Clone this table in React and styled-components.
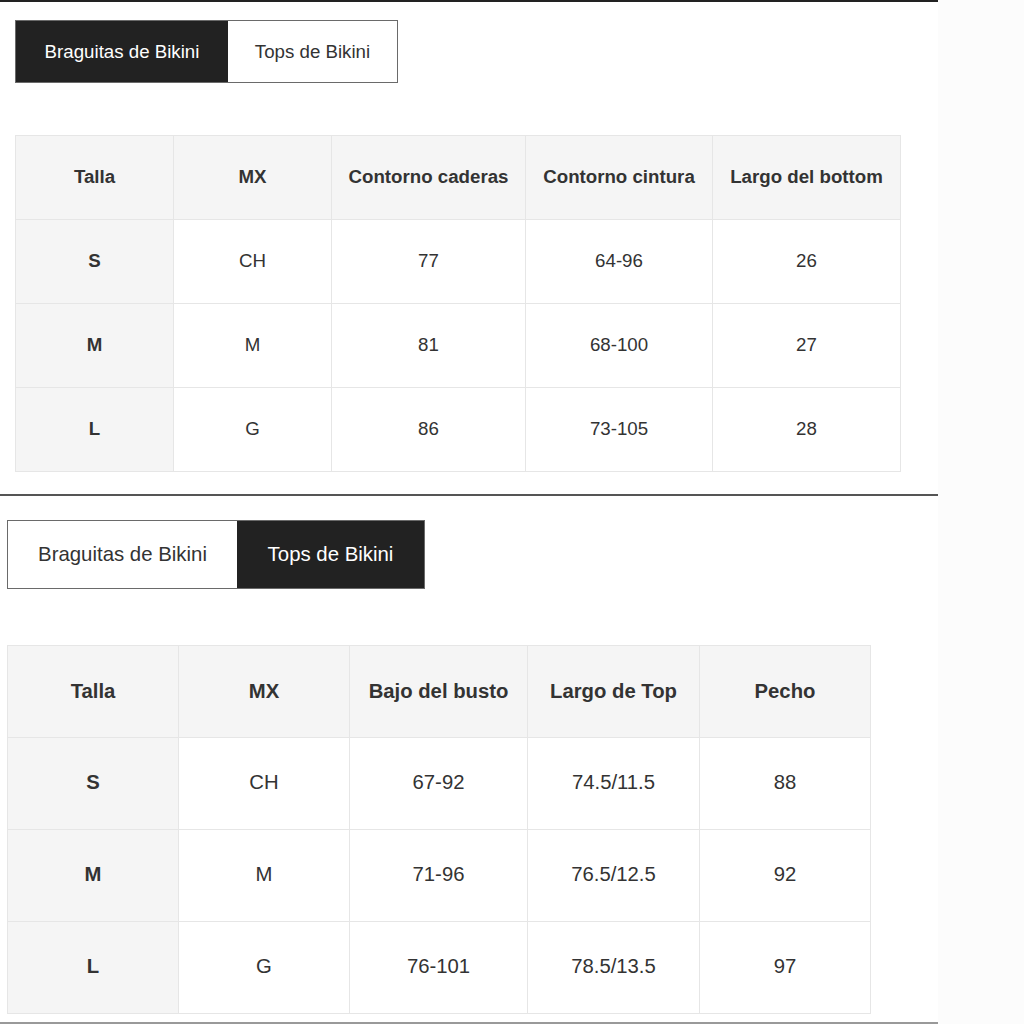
import React from "react";
import styled, { createGlobalStyle } from "styled-components";

const Global = createGlobalStyle`
  html, body { margin: 0; padding: 0; background: #fcfcfc; }
  body { font-family: "Liberation Sans", Arial, sans-serif; color: #333; }
`;

const Page = styled.div`
  width: 938px;
  background: #fff;
  display: flex;
  flex-direction: column;
`;

const Divider = styled.hr`
  margin: ${(p) => p.$mt || 0}px 0 0 0;
  border: 0;
  height: 2px;
  background: ${(p) => p.$color};
`;

const Section = styled.section`
  display: flex;
  flex-direction: column;
  align-items: flex-start;
  padding: ${(p) => p.$pt}px 0 0 ${(p) => p.$pl}px;
`;

const Tabs = styled.div`
  display: flex;
  border: 1px solid #6a6a6a;
  height: ${(p) => p.$h}px;
  box-sizing: border-box;
`;

const Tab = styled.button`
  all: unset;
  box-sizing: border-box;
  display: flex;
  align-items: center;
  justify-content: center;
  width: ${(p) => p.$w}px;
  font-family: "Liberation Sans", Arial, sans-serif;
  font-size: ${(p) => p.$fs}px;
  background: ${(p) => (p.$active ? "#222" : "#fff")};
  color: ${(p) => (p.$active ? "#fff" : "#333")};
`;

const Table = styled.table`
  margin-top: ${(p) => p.$mt}px;
  border-collapse: collapse;
  table-layout: fixed;
  font-family: "Liberation Sans", Arial, sans-serif;
  font-size: ${(p) => p.$fs}px;
  color: #333;
`;

const Cell = styled.td`
  border: 1px solid #e6e6e6;
  height: ${(p) => p.$h}px;
  padding: 0 0 ${(p) => p.$pb || 0}px 0;
  box-sizing: border-box;
  text-align: center;
  vertical-align: middle;
  background: ${(p) => (p.$shade ? "#f5f5f5" : "#fff")};
  font-weight: ${(p) => (p.$bold ? 700 : 400)};
`;

const HeadCell = styled(Cell).attrs({ as: "th" })``;

function SizeTable({ cols, widths, rows, fs, rowH, mt }) {
  return (
    <Table $fs={fs} $mt={mt}>
      <colgroup>
        {widths.map((w, i) => (
          <col key={i} style={{ width: w }} />
        ))}
      </colgroup>
      <thead>
        <tr>
          {cols.map((c) => (
            <HeadCell key={c} $h={rowH} $pb={1} $shade $bold>
              {c}
            </HeadCell>
          ))}
        </tr>
      </thead>
      <tbody>
        {rows.map((r) => (
          <tr key={r[0]}>
            {r.map((v, i) => (
              <Cell key={i} $h={rowH} $pb={2} $shade={i === 0} $bold={i === 0}>
                {v}
              </Cell>
            ))}
          </tr>
        ))}
      </tbody>
    </Table>
  );
}

export default function App() {
  return (
    <>
      <Global />
      <Page>
        <Divider $color="#222" $mt={0} />
        <Section $pt={18} $pl={15}>
          <Tabs $h={63}>
            <Tab $w={212} $fs={18.7} $active>
              Braguitas de Bikini
            </Tab>
            <Tab $w={169} $fs={18.7}>
              Tops de Bikini
            </Tab>
          </Tabs>
          <SizeTable
            mt={52}
            fs={18.7}
            rowH={84}
            widths={[158, 158, 194, 187, 188]}
            cols={["Talla", "MX", "Contorno caderas", "Contorno cintura", "Largo del bottom"]}
            rows={[
              ["S", "CH", "77", "64-96", "26"],
              ["M", "M", "81", "68-100", "27"],
              ["L", "G", "86", "73-105", "28"],
            ]}
          />
        </Section>
        <Divider $color="#555" $mt={22} />
        <Section $pt={24} $pl={7}>
          <Tabs $h={69}>
            <Tab $w={229} $fs={20.4}>
              Braguitas de Bikini
            </Tab>
            <Tab $w={187} $fs={20.4} $active>
              Tops de Bikini
            </Tab>
          </Tabs>
          <SizeTable
            mt={56}
            fs={20.3}
            rowH={92}
            widths={[171, 171, 178, 172, 171]}
            cols={["Talla", "MX", "Bajo del busto", "Largo de Top", "Pecho"]}
            rows={[
              ["S", "CH", "67-92", "74.5/11.5", "88"],
              ["M", "M", "71-96", "76.5/12.5", "92"],
              ["L", "G", "76-101", "78.5/13.5", "97"],
            ]}
          />
        </Section>
        <Divider $color="#999" $mt={8} />
      </Page>
    </>
  );
}
